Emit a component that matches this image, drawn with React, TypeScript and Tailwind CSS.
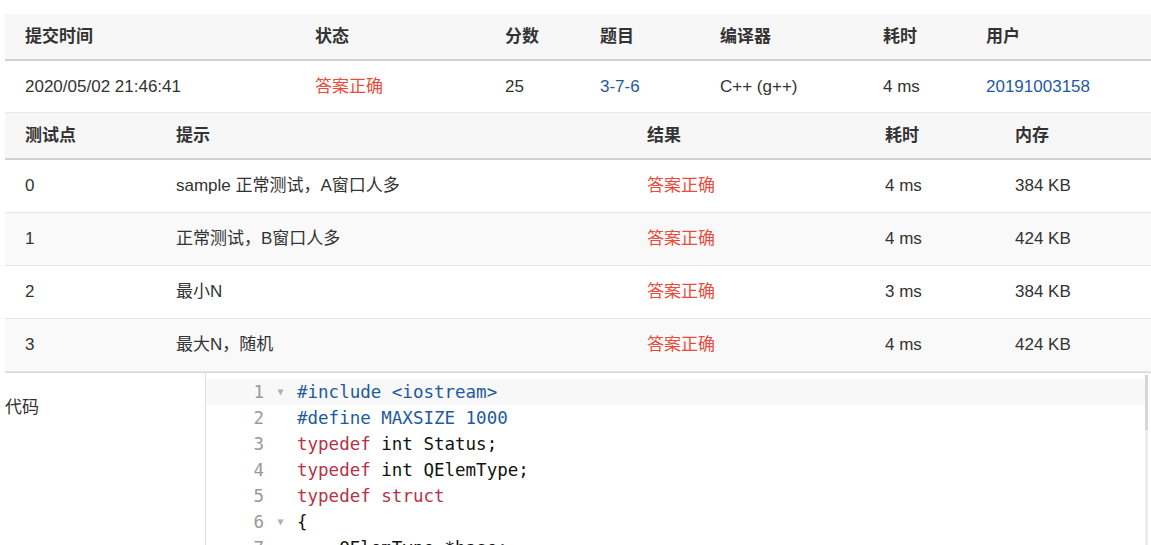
import type { ReactElement } from 'react';

const font = { fontFamily: '"Liberation Sans", Arial, "Noto Sans CJK SC", sans-serif' };

const OK = 'text-[#e74c3c]';
const LINK = 'text-[#1f5aa0]';

const submitCols = [
    { label: '提交时间', w: 'w-[290px]' },
    { label: '状态', w: 'w-[190px]' },
    { label: '分数', w: 'w-[95px]' },
    { label: '题目', w: 'w-[120px]' },
    { label: '编译器', w: 'w-[163px]' },
    { label: '耗时', w: 'w-[103px]' },
    { label: '用户', w: 'flex-1' },
];

const caseCols = [
    { label: '测试点', w: 'w-[151px]' },
    { label: '提示', w: 'w-[471px]' },
    { label: '结果', w: 'w-[238px]' },
    { label: '耗时', w: 'w-[130px]' },
    { label: '内存', w: 'flex-1' },
];

const cases = [
    { id: '0', hint: 'sample 正常测试，A窗口人多', time: '4 ms', mem: '384 KB' },
    { id: '1', hint: '正常测试，B窗口人多', time: '4 ms', mem: '424 KB' },
    { id: '2', hint: '最小N', time: '3 ms', mem: '384 KB' },
    { id: '3', hint: '最大N，随机', time: '4 ms', mem: '424 KB' },
];

type Tok = { t: string; c?: string };

const KW = 'text-[#b5334a]';
const META = 'text-[#1d5a9e]';

const code: { toks: Tok[]; fold?: boolean }[] = [
    { toks: [{ t: '#include <iostream>', c: META }], fold: true },
    { toks: [{ t: '#define MAXSIZE 1000', c: META }] },
    { toks: [{ t: 'typedef', c: KW }, { t: ' int Status;' }] },
    { toks: [{ t: 'typedef', c: KW }, { t: ' int QElemType;' }] },
    { toks: [{ t: 'typedef', c: KW }, { t: ' ' }, { t: 'struct', c: KW }] },
    { toks: [{ t: '{' }], fold: true },
    { toks: [{ t: '    QElemType *base;' }] },
    { toks: [{ t: '    ' }, { t: 'int', c: KW }, { t: ' front;' }] },
];

function HeaderRow({ cols }: { cols: { label: string; w: string }[] }): ReactElement {
    return (
        <div className="flex h-[47px] items-center bg-[#f7f7f7] border-b-2 border-[#d0d0d0]">
            {cols.map((c) => (
                <div key={c.label} className={`${c.w} pl-5 font-bold text-[#333]`}>
                    {c.label}
                </div>
            ))}
        </div>
    );
}

export default function App(): ReactElement {
    return (
        <div className="bg-white min-h-screen pt-[14px] pl-[5px] text-[17px] text-[#333]" style={font}>
            {/* submission summary */}
            <div>
                <HeaderRow cols={submitCols} />
                <div className="flex h-[52px] items-center border-b border-[#eaeaea]">
                    <div className="w-[290px] pl-5">2020/05/02 21:46:41</div>
                    <div className={`w-[190px] pl-5 ${OK}`}>答案正确</div>
                    <div className="w-[95px] pl-5">25</div>
                    <div className={`w-[120px] pl-5 ${LINK}`}>3-7-6</div>
                    <div className="w-[163px] pl-5">C++ (g++)</div>
                    <div className="w-[103px] pl-5">4 ms</div>
                    <div className={`flex-1 pl-5 ${LINK}`}>20191003158</div>
                </div>
            </div>

            {/* test cases */}
            <div>
                <HeaderRow cols={caseCols} />
                {cases.map((r, i) => (
                    <div
                        key={r.id}
                        className={`flex h-[53px] items-center border-b border-[#e6e6e6] ${i % 2 === 1 ? 'bg-[#f9f9f9]' : 'bg-white'}`}
                    >
                        <div className="w-[151px] pl-5">{r.id}</div>
                        <div className="w-[471px] pl-5">{r.hint}</div>
                        <div className={`w-[238px] pl-5 ${OK}`}>答案正确</div>
                        <div className="w-[130px] pl-5">{r.time}</div>
                        <div className="flex-1 pl-5">{r.mem}</div>
                    </div>
                ))}
            </div>

            {/* source */}
            <div className="flex border-t border-[#d8d8d8]">
                <div className="w-[200px] pt-[22px]">代码</div>
                <div className="flex-1 relative border-l border-[#e0e0e0] pt-[6px] pr-[6px]">
                    <div
                        className="text-[17.5px] leading-[26px]"
                        style={{ fontFamily: '"DejaVu Sans Mono", "Liberation Mono", monospace' }}
                    >
                        {code.map((ln, i) => (
                            <div key={i} className={`flex ${i === 0 ? 'bg-[#f8f8f8]' : ''}`}>
                                <div className="w-[58px] text-right text-[#999]">{i + 1}</div>
                                <div className="w-[33px] flex items-center justify-center text-[10px] text-[#b0b0b0]">
                                    {ln.fold ? '▼' : ''}
                                </div>
                                <div className="whitespace-pre text-[#111]">
                                    {ln.toks.map((t, j) => (
                                        <span key={j} className={t.c}>
                                            {t.t}
                                        </span>
                                    ))}
                                </div>
                            </div>
                        ))}
                    </div>
                    <div className="absolute right-[3px] top-[2px] bottom-0 w-[3px] bg-[#ececec]">
                        <div className="h-[55px] bg-[#d6d6d6]" />
                    </div>
                </div>
            </div>
        </div>
    );
}
